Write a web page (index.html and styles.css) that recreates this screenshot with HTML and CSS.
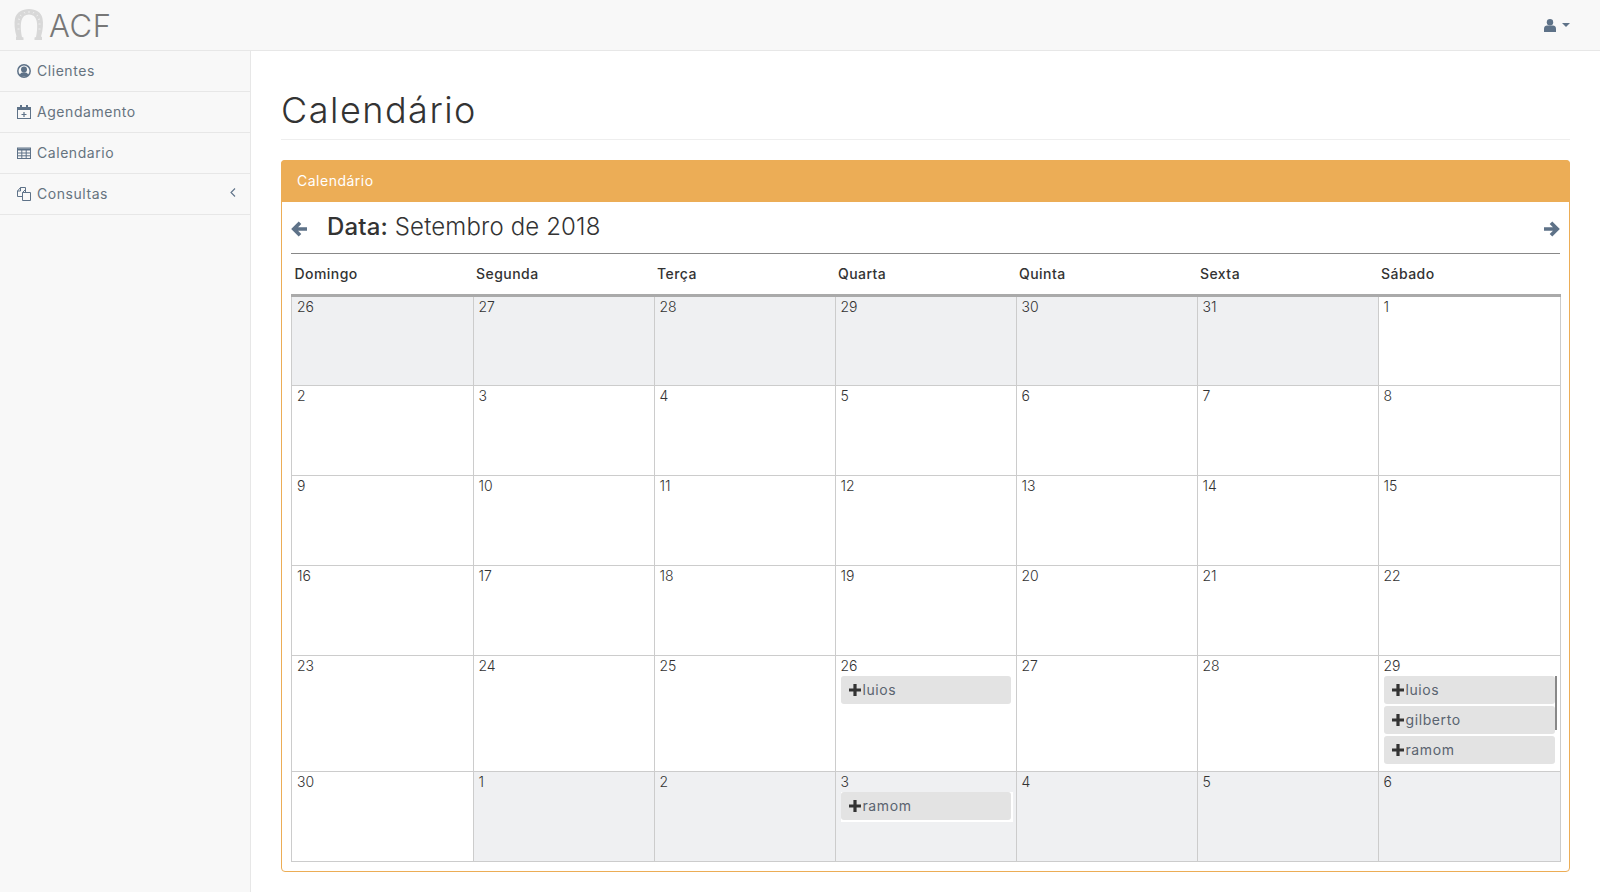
FILE: index.html
```html
<!DOCTYPE html>
<html lang="pt-BR">

<head>
    <meta charset="UTF-8">
    <title>Calendário</title>
    <link rel="stylesheet" href="styles.css">
</head>

<body>
    <nav class="navbar">
        <a class="brand">
            <svg class="horseshoe" width="30" height="32" viewBox="0 0 30 32">
                <path d="M2 31h7.500v-2.500l-1.500-.5C6.500 21 6.500 15 7.500 11.500c1-4 3.500-6 7.500-6s6.500 2 7.500 6c1 3.500 1 9.500-.5 16.500l-1.500.5V31H28v-3l-1-.5c2-7 2.500-13 1.500-18C27.500 3.500 22 0 15 0S2.500 3.500 1 9.500c-1 5-.5 11 1.500 18L2 28z" fill="#d8d8d8" />
                <path d="M4 10l2 .5M6 6l1.500 1M10 3l1 1.500M15 2v2M20 3l-1 1.500M24 6l-1.500 1M26 10l-2 .5M3.500 15h2M3.500 20h2M24.500 15h2M24.500 20h2" stroke="#eeeeee" stroke-width="1" fill="none" />
            </svg>
            <span>ACF</span>
        </a>
        <div class="user-menu">
            <svg width="12" height="13" viewBox="0 0 12 13">
                <circle cx="6" cy="3.300" r="3.200" fill="#5e7288" />
                <path d="M0 13V9.500C0 7.500 1.500 6.500 3 6.500h6c1.500 0 3 1 3 3V13z" fill="#5e7288" />
            </svg>
            <span class="caret"></span>
        </div>
    </nav>

    <div class="wrapper">
        <aside class="sidebar">
            <a class="side-item">
                <svg width="14" height="14" viewBox="0 0 14 14">
                    <circle cx="7" cy="7" r="6.200" fill="none" stroke="#5e7288" stroke-width="1.500" />
                    <circle cx="7" cy="5.500" r="3" fill="#5e7288" />
                    <path d="M2.500 11c1-2.200 2.500-2.800 4.500-2.800s3.500.6 4.500 2.800C10 13 4 13 2.500 11z" fill="#5e7288" />
                </svg>
                Clientes
            </a>
            <a class="side-item">
                <svg width="14" height="14" viewBox="0 0 14 14">
                    <rect x=".5" y="2.500" width="13" height="11" fill="none" stroke="#5e7288" />
                    <path d="M1 3h12v2H1zM3 0h2v3H3zM9 0h2v3H9z" fill="#5e7288" />
                    <path d="M7 7v5M4.500 9.500h5" stroke="#5e7288" stroke-width="1.200" />
                </svg>
                Agendamento
            </a>
            <a class="side-item">
                <svg width="14" height="14" viewBox="0 0 14 14">
                    <rect x=".5" y="2" width="13" height="10.500" fill="none" stroke="#5e7288" />
                    <path d="M1 2.500h12v2H1z" fill="#5e7288" />
                    <path d="M1 7h12M1 9.800h12M4.800 4v8M9.200 4v8" stroke="#5e7288" />
                </svg>
                Calendario
            </a>
            <a class="side-item">
                <svg width="14" height="14" viewBox="0 0 14 14">
                    <path d="M5.500 5.500H13.500V13.500H5.500z" fill="#f8f8f8" stroke="#5e7288" />
                    <path d="M5.500 9.500H.5V4L3.500.5H8.500V5.500" fill="none" stroke="#5e7288" />
                    <path d="M.5 4h3V.5M5.500 5.500L8.500 2.500V5.500" fill="none" stroke="#5e7288" />
                </svg>
                Consultas
                <svg class="chevron" width="6" height="9" viewBox="0 0 6 9">
                    <path d="M5 .5L1 4.500l4 4" fill="none" stroke="#5e7288" stroke-width="1.100" />
                </svg>
            </a>
        </aside>

        <main class="content">
            <h1 class="page-header">Calendário</h1>

            <section class="panel">
                <div class="panel-heading">Calendário</div>
                <div class="panel-body">
                    <div class="month-bar">
                        <svg class="arrow" width="17" height="16" viewBox="0 0 17 16">
                            <path d="M16 8H3.500M9 1.800L2.800 8 9 14.200" fill="none" stroke="#5e7288" stroke-width="3.700" />
                        </svg>
                        <h3 class="month-title"><b>Data:</b> Setembro de 2018</h3>
                        <svg class="arrow" width="17" height="16" viewBox="0 0 17 16">
                            <path d="M1 8h12.500M8 1.800L14.200 8 8 14.200" fill="none" stroke="#5e7288" stroke-width="3.700" />
                        </svg>
                    </div>

                    <table class="calendar">
                        <thead>
                            <tr>
                                <th>Domingo</th>
                                <th>Segunda</th>
                                <th>Terça</th>
                                <th>Quarta</th>
                                <th>Quinta</th>
                                <th>Sexta</th>
                                <th>Sábado</th>
                            </tr>
                        </thead>
                        <tbody>
                            <tr>
                                <td class="off">26</td>
                                <td class="off">27</td>
                                <td class="off">28</td>
                                <td class="off">29</td>
                                <td class="off">30</td>
                                <td class="off">31</td>
                                <td>1</td>
                            </tr>
                            <tr>
                                <td>2</td>
                                <td>3</td>
                                <td>4</td>
                                <td>5</td>
                                <td>6</td>
                                <td>7</td>
                                <td>8</td>
                            </tr>
                            <tr>
                                <td>9</td>
                                <td>10</td>
                                <td>11</td>
                                <td>12</td>
                                <td>13</td>
                                <td>14</td>
                                <td>15</td>
                            </tr>
                            <tr>
                                <td>16</td>
                                <td>17</td>
                                <td>18</td>
                                <td>19</td>
                                <td>20</td>
                                <td>21</td>
                                <td>22</td>
                            </tr>
                            <tr>
                                <td>23</td>
                                <td>24</td>
                                <td>25</td>
                                <td>26
                                    <div class="events">
                                        <div class="event"><svg width="12" height="12" viewBox="0 0 12 12"><path d="M6 0v12M0 6h12" stroke="#333" stroke-width="3.200" /></svg>luios</div>
                                    </div>
                                </td>
                                <td>27</td>
                                <td>28</td>
                                <td>29
                                    <div class="events scrolled">
                                        <div class="event"><svg width="12" height="12" viewBox="0 0 12 12"><path d="M6 0v12M0 6h12" stroke="#333" stroke-width="3.200" /></svg>luios</div>
                                        <div class="event"><svg width="12" height="12" viewBox="0 0 12 12"><path d="M6 0v12M0 6h12" stroke="#333" stroke-width="3.200" /></svg>gilberto</div>
                                        <div class="event"><svg width="12" height="12" viewBox="0 0 12 12"><path d="M6 0v12M0 6h12" stroke="#333" stroke-width="3.200" /></svg>ramom</div>
                                    </div>
                                </td>
                            </tr>
                            <tr>
                                <td>30</td>
                                <td class="off">1</td>
                                <td class="off">2</td>
                                <td class="off">3
                                    <div class="events">
                                        <div class="event"><svg width="12" height="12" viewBox="0 0 12 12"><path d="M6 0v12M0 6h12" stroke="#333" stroke-width="3.200" /></svg>ramom</div>
                                    </div>
                                </td>
                                <td class="off">4</td>
                                <td class="off">5</td>
                                <td class="off">6</td>
                            </tr>
                        </tbody>
                    </table>
                </div>
            </section>
        </main>
    </div>
</body>

</html>
```

FILE: styles.css
```css
* {
    box-sizing: border-box;
}

body {
    margin: 0;
    font-family: Inter, "Open Sans", sans-serif;
    font-size: 14px;
    line-height: 20px;
    color: #333;
    background-color: #fff;
}

.navbar {
    display: flex;
    justify-content: space-between;
    align-items: center;
    height: 51px;
    padding: 0 30px 0 14px;
    background-color: #f8f8f8;
    border-bottom: 1px solid #e7e7e7;
}

.brand {
    display: flex;
    align-items: center;
    gap: 5px;
    font-size: 31px;
    line-height: 34px;
    font-weight: 300;
    letter-spacing: 0.6px;
    color: #777;
}

.brand span {
    margin-top: 2px;
}

.user-menu {
    display: flex;
    align-items: center;
    gap: 6px;
}

.caret {
    width: 0;
    height: 0;
    border-top: 4px solid #5e7288;
    border-left: 4px solid transparent;
    border-right: 4px solid transparent;
}

.wrapper {
    display: flex;
    min-height: 841px;
}

.sidebar {
    flex: 0 0 251px;
    background-color: #f8f8f8;
    border-right: 1px solid #e7e7e7;
}

.side-item {
    display: flex;
    align-items: center;
    gap: 6px;
    height: 41px;
    padding: 0 17px;
    border-bottom: 1px solid #e7e7e7;
    color: #66737f;
    letter-spacing: 0.55px;
}

.chevron {
    margin-left: auto;
    margin-right: -3px;
    margin-top: -4px;
}

.content {
    flex: 1;
    min-width: 0;
    padding: 0 30px;
}

.page-header {
    margin: 40px 0 20px;
    padding-bottom: 9px;
    height: 49px;
    font-size: 36px;
    line-height: 38px;
    font-weight: 300;
    letter-spacing: 1.5px;
    border-bottom: 1px solid #eee;
}

.panel {
    height: 712px;
    border: 1px solid #ecad56;
    border-radius: 4px;
}

.panel-heading {
    height: 42px;
    margin: -1px -1px 0;
    padding: 11px 16px;
    color: #fff;
    letter-spacing: 0.5px;
    background-color: #ecad56;
    border-radius: 4px 4px 0 0;
}

.panel-body {
    padding: 0 9px;
}

.month-bar {
    display: flex;
    align-items: center;
    height: 52px;
    border-bottom: 1px solid #888;
}

.month-title {
    flex: 1;
    margin: -2px 0 0 19px;
    font-size: 24px;
    line-height: 30px;
    font-weight: 300;
    letter-spacing: 0.15px;
}

.month-title b {
    font-weight: 500;
}

.arrow {
    margin-top: 2px;
}

.calendar {
    width: 1268.5px;
    border-collapse: collapse;
    table-layout: fixed;
}

.calendar th {
    width: 181px;
    height: 41px;
    padding: 0 3px;
    text-align: left;
    font-weight: 500;
    letter-spacing: 0.45px;
    border-bottom: 3px solid #aaa;
}

.calendar th:first-child {
    width: 181.5px;
}

.calendar th:last-child {
    width: 182px;
}

.calendar td {
    height: 90px;
    padding: 0 5px;
    vertical-align: top;
    font-weight: 300;
    border: 1px solid #ccc;
}

.calendar thead + tbody tr:first-child td {
    border-top: 3px solid #aaa;
}

.calendar td.off {
    background-color: #eff0f2;
}

.events {
    position: relative;
    margin-right: -2px;
    padding: 0 2px 2px 0;
    background-color: #fff;
}

.event {
    display: flex;
    align-items: center;
    gap: 2px;
    height: 28px;
    padding-left: 8px;
    margin-bottom: 2px;
    background-color: #e3e3e3;
    border-radius: 3px;
    font-weight: 400;
    color: #5a6470;
    letter-spacing: 0.6px;
}

.event:last-child {
    margin-bottom: 0;
}

.events.scrolled {
    margin-right: 0;
    padding: 0 0 7px;
}

.events.scrolled::after {
    content: "";
    position: absolute;
    top: 0;
    right: -2px;
    width: 2px;
    height: 54px;
    background-color: #888;
}
```
